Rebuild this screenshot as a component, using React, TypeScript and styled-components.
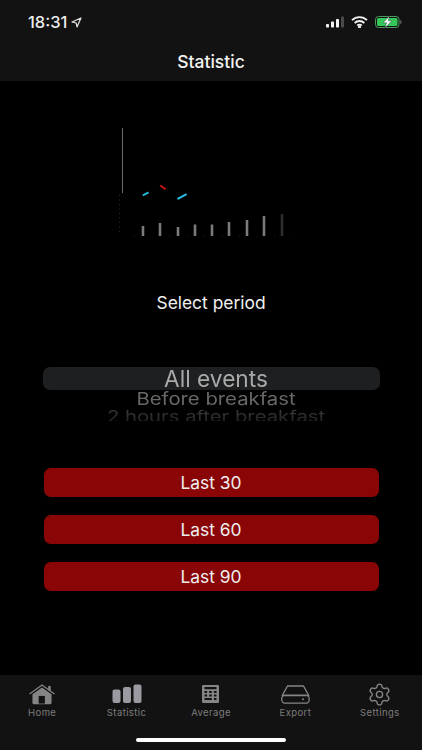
import React from "react";
import styled, { createGlobalStyle } from "styled-components";
import { Settings } from "lucide-react";

const Global = createGlobalStyle`
  html, body { margin: 0; padding: 0; background: #000; }
  body { font-family: Inter, "Liberation Sans", sans-serif; -webkit-font-smoothing: antialiased; }
  * { box-sizing: border-box; }
`;

const Page = styled.div`
  width: 422px; height: 750px; background: #000; display: flex; flex-direction: column; overflow: hidden; color: #fff;
`;
const Header = styled.header`
  height: 81px; background: #121212; display: flex; flex-direction: column; flex: none;
`;
const StatusBar = styled.div`
  height: 44px; padding: 0 20px 0 28px; display: flex; align-items: center; justify-content: space-between;
`;
const Clock = styled.div`
  display: flex; align-items: center; gap: 4px; font-size: 16.5px; font-weight: 500; color: #ececec;
`;
const StatusIcons = styled.div`
  display: flex; align-items: center; gap: 7px;
`;
const Title = styled.h1`
  margin: 0; text-align: center; font-size: 17.5px; line-height: 35px; font-weight: 500; color: #f2f2f2;
`;
const Main = styled.main`
  flex: 1; display: flex; flex-direction: column; align-items: center; min-height: 0;
`;
const Chart = styled.svg`
  display: block; margin-top: 47px; flex: none;
`;
const SectionLabel = styled.div`
  margin-top: 50px; font-size: 17.4px; line-height: 20px; color: #f0f0f0;
`;
const Wheel = styled.div`
  margin-top: 54px; width: 337px; height: 54px; overflow: hidden; display: flex; flex-direction: column; align-items: center;
  padding-left: 0;
  -webkit-mask-image: linear-gradient(#000 70%, rgba(0,0,0,0.5) 100%);
`;
const Selected = styled.div`
  width: 100%; height: 23px; flex: none; background: #1e1f21; border-radius: 7px; text-align: center; padding-left: 10px;
  font-size: 22.7px; line-height: 24px; color: #a9a9a9;
`;
const WheelRow = styled.div<{ $squash: number; $color: string }>`
  flex: none; height: 18px; margin-left: 10px; font-size: 20.3px; line-height: 18px; color: ${p => p.$color}; white-space: nowrap;
  transform: scaleY(${p => p.$squash});
`;
const Actions = styled.div`
  margin-top: 47px; width: 335px; display: flex; flex-direction: column; gap: 18px;
`;
const PeriodButton = styled.button`
  height: 29px; padding: 0; border: none; border-radius: 7px; background: #8a0606; color: #eee; font: inherit; font-size: 17.4px; line-height: 29px;
`;
const TabBar = styled.nav`
  height: 75px; flex: none; background: #121212; display: flex; flex-direction: column;
`;
const Tabs = styled.div`
  display: grid; grid-template-columns: repeat(5, 1fr); padding: 7px 0 0; height: 63px;
`;
const Tab = styled.div`
  display: flex; flex-direction: column; align-items: center; color: #868686;
`;
const TabIcon = styled.div`
  height: 24px; display: flex; align-items: center; justify-content: center;
`;
const TabLabel = styled.span`
  margin-top: 1px; font-size: 9.5px; line-height: 12px; letter-spacing: 0.4px; color: #7d7d7d;
`;
const HomeIndicator = styled.div`
  width: 150px; height: 4px; margin: 0 auto; border-radius: 2px; background: #fff;
`;

const bars = [
  [143, 226], [160, 223], [178, 227], [195, 224.5], [212, 224.5], [229, 222], [247, 220], [264, 216],
];

const StatChart = () => (
  <Chart width="190" height="115" viewBox="116 128 190 115">
    <line x1="122.5" y1="128" x2="122.5" y2="193" stroke="#6a6a6a" strokeWidth="1" />
    <line x1="119.5" y1="195" x2="119.5" y2="232" stroke="#2a2a2a" strokeWidth="1" strokeDasharray="1 3.5" />
    <line x1="134" y1="236.5" x2="292" y2="236.5" stroke="#1e1e1e" strokeWidth="1" strokeDasharray="1 16.5" />
    {bars.map(([x, y]) => (
      <line key={x} x1={x} y1={y} x2={x} y2={236} stroke="#7b7b7b" strokeWidth="2.6" />
    ))}
    <line x1="282" y1="214" x2="282" y2="236" stroke="#2e2e2e" strokeWidth="2.6" />
    <line x1="142.8" y1="195.3" x2="148.6" y2="192.4" stroke="#22b8dc" strokeWidth="2" />
    <line x1="160.3" y1="185.5" x2="165.6" y2="189.3" stroke="#c51414" strokeWidth="2" />
    <line x1="177.5" y1="199" x2="186.6" y2="194.2" stroke="#22b8dc" strokeWidth="2" />
  </Chart>
);

const HomeIcon = () => (
  <svg width="28" height="21" viewBox="0 0 28 22">
    <path d="M1 10.5 14 1l13 9.5" fill="none" stroke="#858585" strokeWidth="1.3" />
    <rect x="20.5" y="2" width="2.6" height="5" fill="#858585" />
    <path d="M4 10.8 14 3.6l10 7.2V20a1.2 1.2 0 0 1-1.2 1.2H5.2A1.2 1.2 0 0 1 4 20Z" fill="#858585" />
    <rect x="10.5" y="12.5" width="6.5" height="8" fill="#121212" />
  </svg>
);
const BarsIcon = () => (
  <svg width="30" height="20" viewBox="0 0 30 20" fill="#9a9aa0">
    <rect x="0.5" y="5.5" width="8" height="13.5" rx="2" />
    <rect x="11" y="3" width="8" height="16" rx="2" />
    <rect x="21.5" y="0.5" width="8" height="18.5" rx="2" />
  </svg>
);
const CalcIcon = () => (
  <svg width="17" height="18" viewBox="0 0 17 18">
    <rect x="0" y="0" width="17" height="18" rx="1.2" fill="#858585" />
    <rect x="2.5" y="2" width="12" height="2.2" fill="#121212" />
    {[6, 9.5].map(y =>
      [2.5, 7.2, 11.9].map(x => <rect key={`${x}-${y}`} x={x} y={y} width="2.6" height="2" fill="#121212" />)
    )}
    <rect x="2.5" y="13" width="7.3" height="2" fill="#121212" />
    <rect x="11.9" y="13" width="2.6" height="2" fill="#121212" />
  </svg>
);
const DriveIcon = () => (
  <svg width="29" height="19" viewBox="0 0 29 19" fill="none" stroke="#858585" strokeWidth="1.3">
    <path d="M6.5 1h16L27.8 10.6H1.2Z" strokeLinejoin="round" />
    <rect x="0.8" y="10.2" width="27.4" height="8" rx="3.5" />
    <circle cx="22" cy="14.2" r="1" fill="#858585" stroke="none" />
  </svg>
);
const LocationArrow = () => (
  <svg width="11" height="11" viewBox="0 0 11 11" fill="none" stroke="#e8e8e8" strokeWidth="1.2" strokeLinejoin="round">
    <path d="M10 1 1 5l4.2 1L6 10Z" />
  </svg>
);
const Cellular = () => (
  <svg width="18" height="12" viewBox="0 0 18 12">
    <rect x="0" y="8" width="3" height="3.5" rx="0.7" fill="#f2f2f2" />
    <rect x="5" y="5.5" width="3" height="6" rx="0.7" fill="#f2f2f2" />
    <rect x="10" y="3" width="3" height="8.5" rx="0.7" fill="#f2f2f2" />
    <rect x="15" y="0.5" width="3" height="11" rx="0.7" fill="#4a4a4a" />
  </svg>
);
const Wifi = () => (
  <svg width="17" height="12" viewBox="0 0 17 12" fill="none" stroke="#f2f2f2" strokeWidth="1.9">
    <path d="M1 4.2a10.6 10.6 0 0 1 15 0" />
    <path d="M3.7 7a6.8 6.8 0 0 1 9.6 0" />
    <path d="M6.3 9.6a3 3 0 0 1 4.4 0" />
    <circle cx="8.5" cy="10.8" r="0.6" fill="#f2f2f2" />
  </svg>
);
const Battery = () => (
  <svg width="27" height="12" viewBox="0 0 27 12">
    <rect x="0.5" y="0.5" width="23.5" height="11" rx="3" fill="none" stroke="#4d9a5c" strokeWidth="1" />
    <rect x="2" y="2" width="20.5" height="8" rx="1.6" fill="#35c759" />
    <rect x="25" y="4" width="1.5" height="4" rx="0.7" fill="#555" />
    <path d="M14.5 0 8 6.8h3.6L10 12l6.8-7.2h-3.6Z" fill="#fff" stroke="#123" strokeWidth="0.4" />
  </svg>
);

const tabs = [
  { label: "Home", icon: <HomeIcon /> },
  { label: "Statistic", icon: <BarsIcon /> },
  { label: "Average", icon: <CalcIcon /> },
  { label: "Export", icon: <DriveIcon /> },
  { label: "Settings", icon: <Settings size={25} strokeWidth={1.3} color="#858585" /> },
];

export default function App() {
  return (
    <Page>
      <Global />
      <Header>
        <StatusBar>
          <Clock>18:31 <LocationArrow /></Clock>
          <StatusIcons>
            <Cellular />
            <Wifi />
            <Battery />
          </StatusIcons>
        </StatusBar>
        <Title>Statistic</Title>
      </Header>
      <Main>
        <StatChart />
        <SectionLabel>Select period</SectionLabel>
        <Wheel>
          <Selected>All events</Selected>
          <WheelRow $squash={0.85} $color="#686868">Before breakfast</WheelRow>
          <WheelRow $squash={0.75} $color="#454545">2 hours after breakfast</WheelRow>
        </Wheel>
        <Actions>
          <PeriodButton>Last 30</PeriodButton>
          <PeriodButton>Last 60</PeriodButton>
          <PeriodButton>Last 90</PeriodButton>
        </Actions>
      </Main>
      <TabBar>
        <Tabs>
          {tabs.map(t => (
            <Tab key={t.label}>
              <TabIcon>{t.icon}</TabIcon>
              <TabLabel>{t.label}</TabLabel>
            </Tab>
          ))}
        </Tabs>
        <HomeIndicator />
      </TabBar>
    </Page>
  );
}
